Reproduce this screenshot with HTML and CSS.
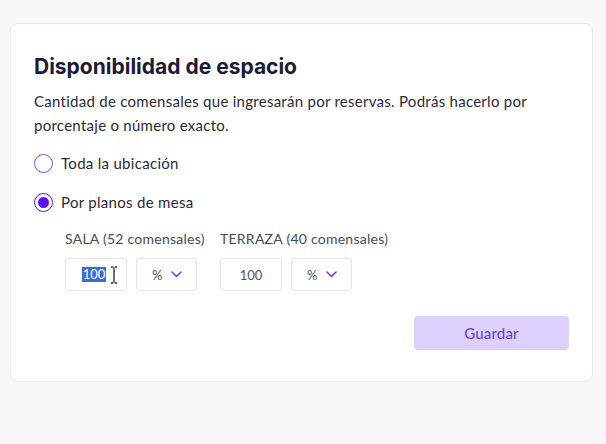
FILE: index.html
```
<!DOCTYPE html>
<html lang="es">
<head>
    <meta charset="UTF-8">
    <meta name="viewport" content="width=device-width, initial-scale=1.0">
    <title>Disponibilidad de espacio</title>
    <link rel="stylesheet" href="styles.css">
</head>
<body>
    <div class="card">
        <h2>Disponibilidad de espacio</h2>
        <p class="desc">Cantidad de comensales que ingresarán por reservas. Podrás hacerlo por porcentaje o número exacto.</p>

        <div class="radio-list">
            <label class="radio-row">
                <span class="radio"></span>
                Toda la ubicación
            </label>
            <label class="radio-row">
                <span class="radio checked"></span>
                Por planos de mesa
            </label>
        </div>

        <div class="plans">
            <div class="plan">
                <div class="plan-label">SALA (52 comensales)</div>
                <div class="fields">
                    <div class="num-box"><span class="selected">100</span>
                        <svg class="ibeam" width="8" height="18" viewBox="0 0 8 18"><path d="M1 1h2.2M4.8 1H7M4 1.5v15M1 17h2.2M4.8 17H7" stroke="#222" stroke-width="1.3" fill="none"/></svg>
                    </div>
                    <div class="unit-box">%
                        <svg width="11" height="7" viewBox="0 0 11 7"><path d="M1 1l4.5 4.5L10 1" stroke="#7b3fe4" stroke-width="1.6" fill="none" stroke-linecap="round" stroke-linejoin="round"/></svg>
                    </div>
                </div>
            </div>
            <div class="plan">
                <div class="plan-label">TERRAZA (40 comensales)</div>
                <div class="fields">
                    <div class="num-box">100</div>
                    <div class="unit-box">%
                        <svg width="11" height="7" viewBox="0 0 11 7"><path d="M1 1l4.5 4.5L10 1" stroke="#7b3fe4" stroke-width="1.6" fill="none" stroke-linecap="round" stroke-linejoin="round"/></svg>
                    </div>
                </div>
            </div>
        </div>

        <div class="actions">
            <button class="save">Guardar</button>
        </div>
    </div>
</body>
</html>
```

FILE: styles.css
```
body {
    margin: 0;
    padding: 23px 13px 0 10px;
    background-color: #faf7fb;
    font-family: Lato, "Open Sans", sans-serif;
    color: #2b2a3a;
}
.card {
    background-color: #fff;
    border: 1px solid #ebe8ee;
    border-radius: 8px;
    padding: 29px 23px 31px 23px;
}
h2 {
    margin: 0;
    font-family: Inter, sans-serif;
    font-weight: 700;
    font-size: 21px;
    line-height: 28px;
    color: #1d1b34;
}
.desc {
    margin: 8px 0 0;
    font-size: 15px;
    line-height: 24px;
    letter-spacing: 0.27px;
    color: #2b2a3a;
}
.radio-list {
    display: flex;
    flex-direction: column;
    gap: 15px;
    margin-top: 14px;
}
.radio-row {
    display: flex;
    align-items: center;
    gap: 8px;
    height: 24px;
    font-size: 15px;
    letter-spacing: 0.3px;
}
.radio {
    box-sizing: border-box;
    width: 19px;
    height: 19px;
    border: 1.5px solid #7a4fe8;
    border-radius: 50%;
    display: flex;
    align-items: center;
    justify-content: center;
}
.radio.checked {
    border-color: #5a14f2;
}
.radio.checked::after {
    content: "";
    width: 11px;
    height: 11px;
    border-radius: 50%;
    background-color: #5a0ff5;
}
.plans {
    display: flex;
    gap: 15px;
    margin-top: 16px;
    padding-left: 31px;
}
.plan {
    width: 140px;
}
.plan-label {
    white-space: nowrap;
    font-size: 14px;
    line-height: 18px;
    letter-spacing: 0.25px;
    color: #4a4a55;
}
.fields {
    display: flex;
    gap: 9px;
    margin-top: 10px;
}
.num-box,
.unit-box {
    box-sizing: border-box;
    height: 33px;
    border: 1px solid #e6e4ea;
    border-radius: 3px;
    display: flex;
    align-items: center;
    font-size: 13px;
    color: #555;
}
.num-box {
    width: 62px;
    justify-content: center;
    gap: 4px;
}
.selected {
    background-color: #3d6ad6;
    color: #fff;
    padding: 0 1px;
    line-height: 15px;
}
.ibeam {
    margin-right: -8px;
}
.unit-box {
    width: 61px;
    padding-left: 15px;
    gap: 9px;
}
.actions {
    display: flex;
    justify-content: flex-end;
    margin-top: 25px;
}
.save {
    width: 155px;
    height: 34px;
    border: none;
    border-radius: 4px;
    background-color: #ddd0fc;
    color: #6236d6;
    font-family: Lato, sans-serif;
    font-size: 15px;
    letter-spacing: 0.2px;
    cursor: pointer;
}
```
